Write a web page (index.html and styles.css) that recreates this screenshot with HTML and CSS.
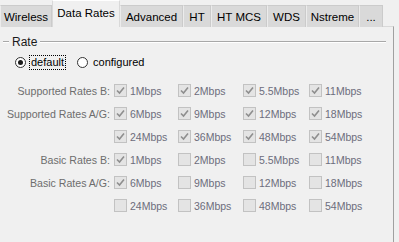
FILE: index.html
```html
<!DOCTYPE html>
<html lang="en">
<head>
    <meta charset="UTF-8">
    <title>Data Rates</title>
    <link rel="stylesheet" href="styles.css">
</head>
<body>
    <div class="tabs">
        <div class="tab w-wireless">Wireless</div>
        <div class="tab active w-rates">Data Rates</div>
        <div class="tab w-advanced">Advanced</div>
        <div class="tab w-ht">HT</div>
        <div class="tab w-htmcs">HT MCS</div>
        <div class="tab w-wds">WDS</div>
        <div class="tab w-nstreme">Nstreme</div>
        <div class="tab w-more">...</div>
    </div>

    <div class="panel">
        <!-- Rate group -->
        <div class="group-head">
            <span class="rule short"></span>
            <span class="group-title">Rate</span>
            <span class="rule"></span>
        </div>

        <div class="radios">
            <span class="radio on"></span>
            <span class="radio-label focus">default</span>
            <span class="radio"></span>
            <span class="radio-label">configured</span>
        </div>

        <div class="rates" id="rates"></div>
    </div>

    <script>
        const check = '<svg width="9" height="9" viewBox="0 0 9 9"><path d="M1 4.5 L3.5 7 L8 1.5" fill="none" stroke="#8e8e8e" stroke-width="1.6"/></svg>';

        const rows = [
            { label: "Supported Rates B:", rates: ["1Mbps", "2Mbps", "5.5Mbps", "11Mbps"], on: [1, 1, 1, 1] },
            { label: "Supported Rates A/G:", rates: ["6Mbps", "9Mbps", "12Mbps", "18Mbps"], on: [1, 1, 1, 1] },
            { label: "", rates: ["24Mbps", "36Mbps", "48Mbps", "54Mbps"], on: [1, 1, 1, 1] },
            { label: "Basic Rates B:", rates: ["1Mbps", "2Mbps", "5.5Mbps", "11Mbps"], on: [1, 0, 0, 0] },
            { label: "Basic Rates A/G:", rates: ["6Mbps", "9Mbps", "12Mbps", "18Mbps"], on: [1, 0, 0, 0] },
            { label: "", rates: ["24Mbps", "36Mbps", "48Mbps", "54Mbps"], on: [0, 0, 0, 0] }
        ];

        let html = "";
        rows.forEach(row => {
            html += `<div class="rate-label">${row.label}</div>`;
            row.rates.forEach((r, i) => {
                html += `<div class="rate"><span class="box">${row.on[i] ? check : ""}</span><span class="rate-text">${r}</span></div>`;
            });
        });
        document.getElementById('rates').innerHTML = html;
    </script>
</body>
</html>
```

FILE: styles.css
```css
body {
    margin: 0;
    background-color: #f0f0f0;
    font-family: "Liberation Sans", Arial, sans-serif;
    font-size: 11px;
    color: #000000;
    overflow: hidden;
}

.tabs {
    display: flex;
    align-items: flex-end;
    height: 26px;
    position: relative;
    z-index: 1;
}

.tab {
    height: 22px;
    box-sizing: border-box;
    background-color: #d9d9d9;
    border: 1px solid #cbcbcb;
    border-bottom: none;
    border-left-color: #ececec;
    display: flex;
    align-items: center;
    justify-content: center;
    font-size: 11.5px;
    margin-bottom: -1px;
}

.tab.active {
    height: 27px;
    background-color: #f0f0f0;
    border-color: #d9d9d9;
    border-top-color: #ffffff;
    padding-bottom: 2px;
}

.w-wireless { width: 52px; }
.w-rates { width: 68px; }
.w-advanced { width: 63px; }
.w-ht { width: 28px; }
.w-htmcs { width: 56px; }
.w-wds { width: 39px; }
.w-nstreme { width: 53px; }
.w-more { width: 24px; }

.panel {
    width: 394px;
    height: 216px;
    box-sizing: border-box;
    border-top: 1px solid #d9d9d9;
    border-right: 1px solid #a0a0a0;
}

.group-head {
    display: flex;
    align-items: center;
    height: 14px;
    margin-top: 8px;
    padding-left: 3px;
    width: 383px;
}

.rule {
    flex: 1;
    border-top: 1px solid #a8a8a8;
    border-bottom: 1px solid #ffffff;
}

.rule.short {
    flex: none;
    width: 6px;
}

.group-title {
    font-size: 12px;
    padding: 0 3px;
    color: #1a1a1a;
}

.radios {
    display: flex;
    align-items: center;
    height: 14px;
    margin-top: 6px;
    padding-left: 15px;
}

.radio {
    width: 11px;
    height: 11px;
    box-sizing: border-box;
    border: 1px solid #333333;
    border-radius: 50%;
    background-color: #ffffff;
    display: flex;
    align-items: center;
    justify-content: center;
}

.radio.on::after {
    content: "";
    width: 5px;
    height: 5px;
    border-radius: 50%;
    background-color: #1a1a1a;
}

.radio-label {
    margin-left: 4px;
    margin-right: 10px;
    padding: 0 1px;
    line-height: 13px;
}

.radio-label.focus {
    outline: 1px dotted #000000;
    margin-right: 12px;
}

.rates {
    display: grid;
    grid-template-columns: 110px 64px 65px 66px 66px;
    grid-auto-rows: 23px;
    margin-top: 10px;
}

.rate-label {
    text-align: right;
    color: #6d6d6d;
    align-self: center;
    white-space: nowrap;
    font-size: 10.6px;
}

.rate {
    display: flex;
    align-items: center;
    margin-left: 4px;
}

.box {
    width: 13px;
    height: 13px;
    box-sizing: border-box;
    border: 1px solid #c2c2c2;
    background-color: #e4e4e4;
    display: flex;
    align-items: center;
    justify-content: center;
}

.rate-text {
    margin-left: 3px;
    color: #6d6d7c;
    white-space: nowrap;
    font-size: 10.5px;
}
```
